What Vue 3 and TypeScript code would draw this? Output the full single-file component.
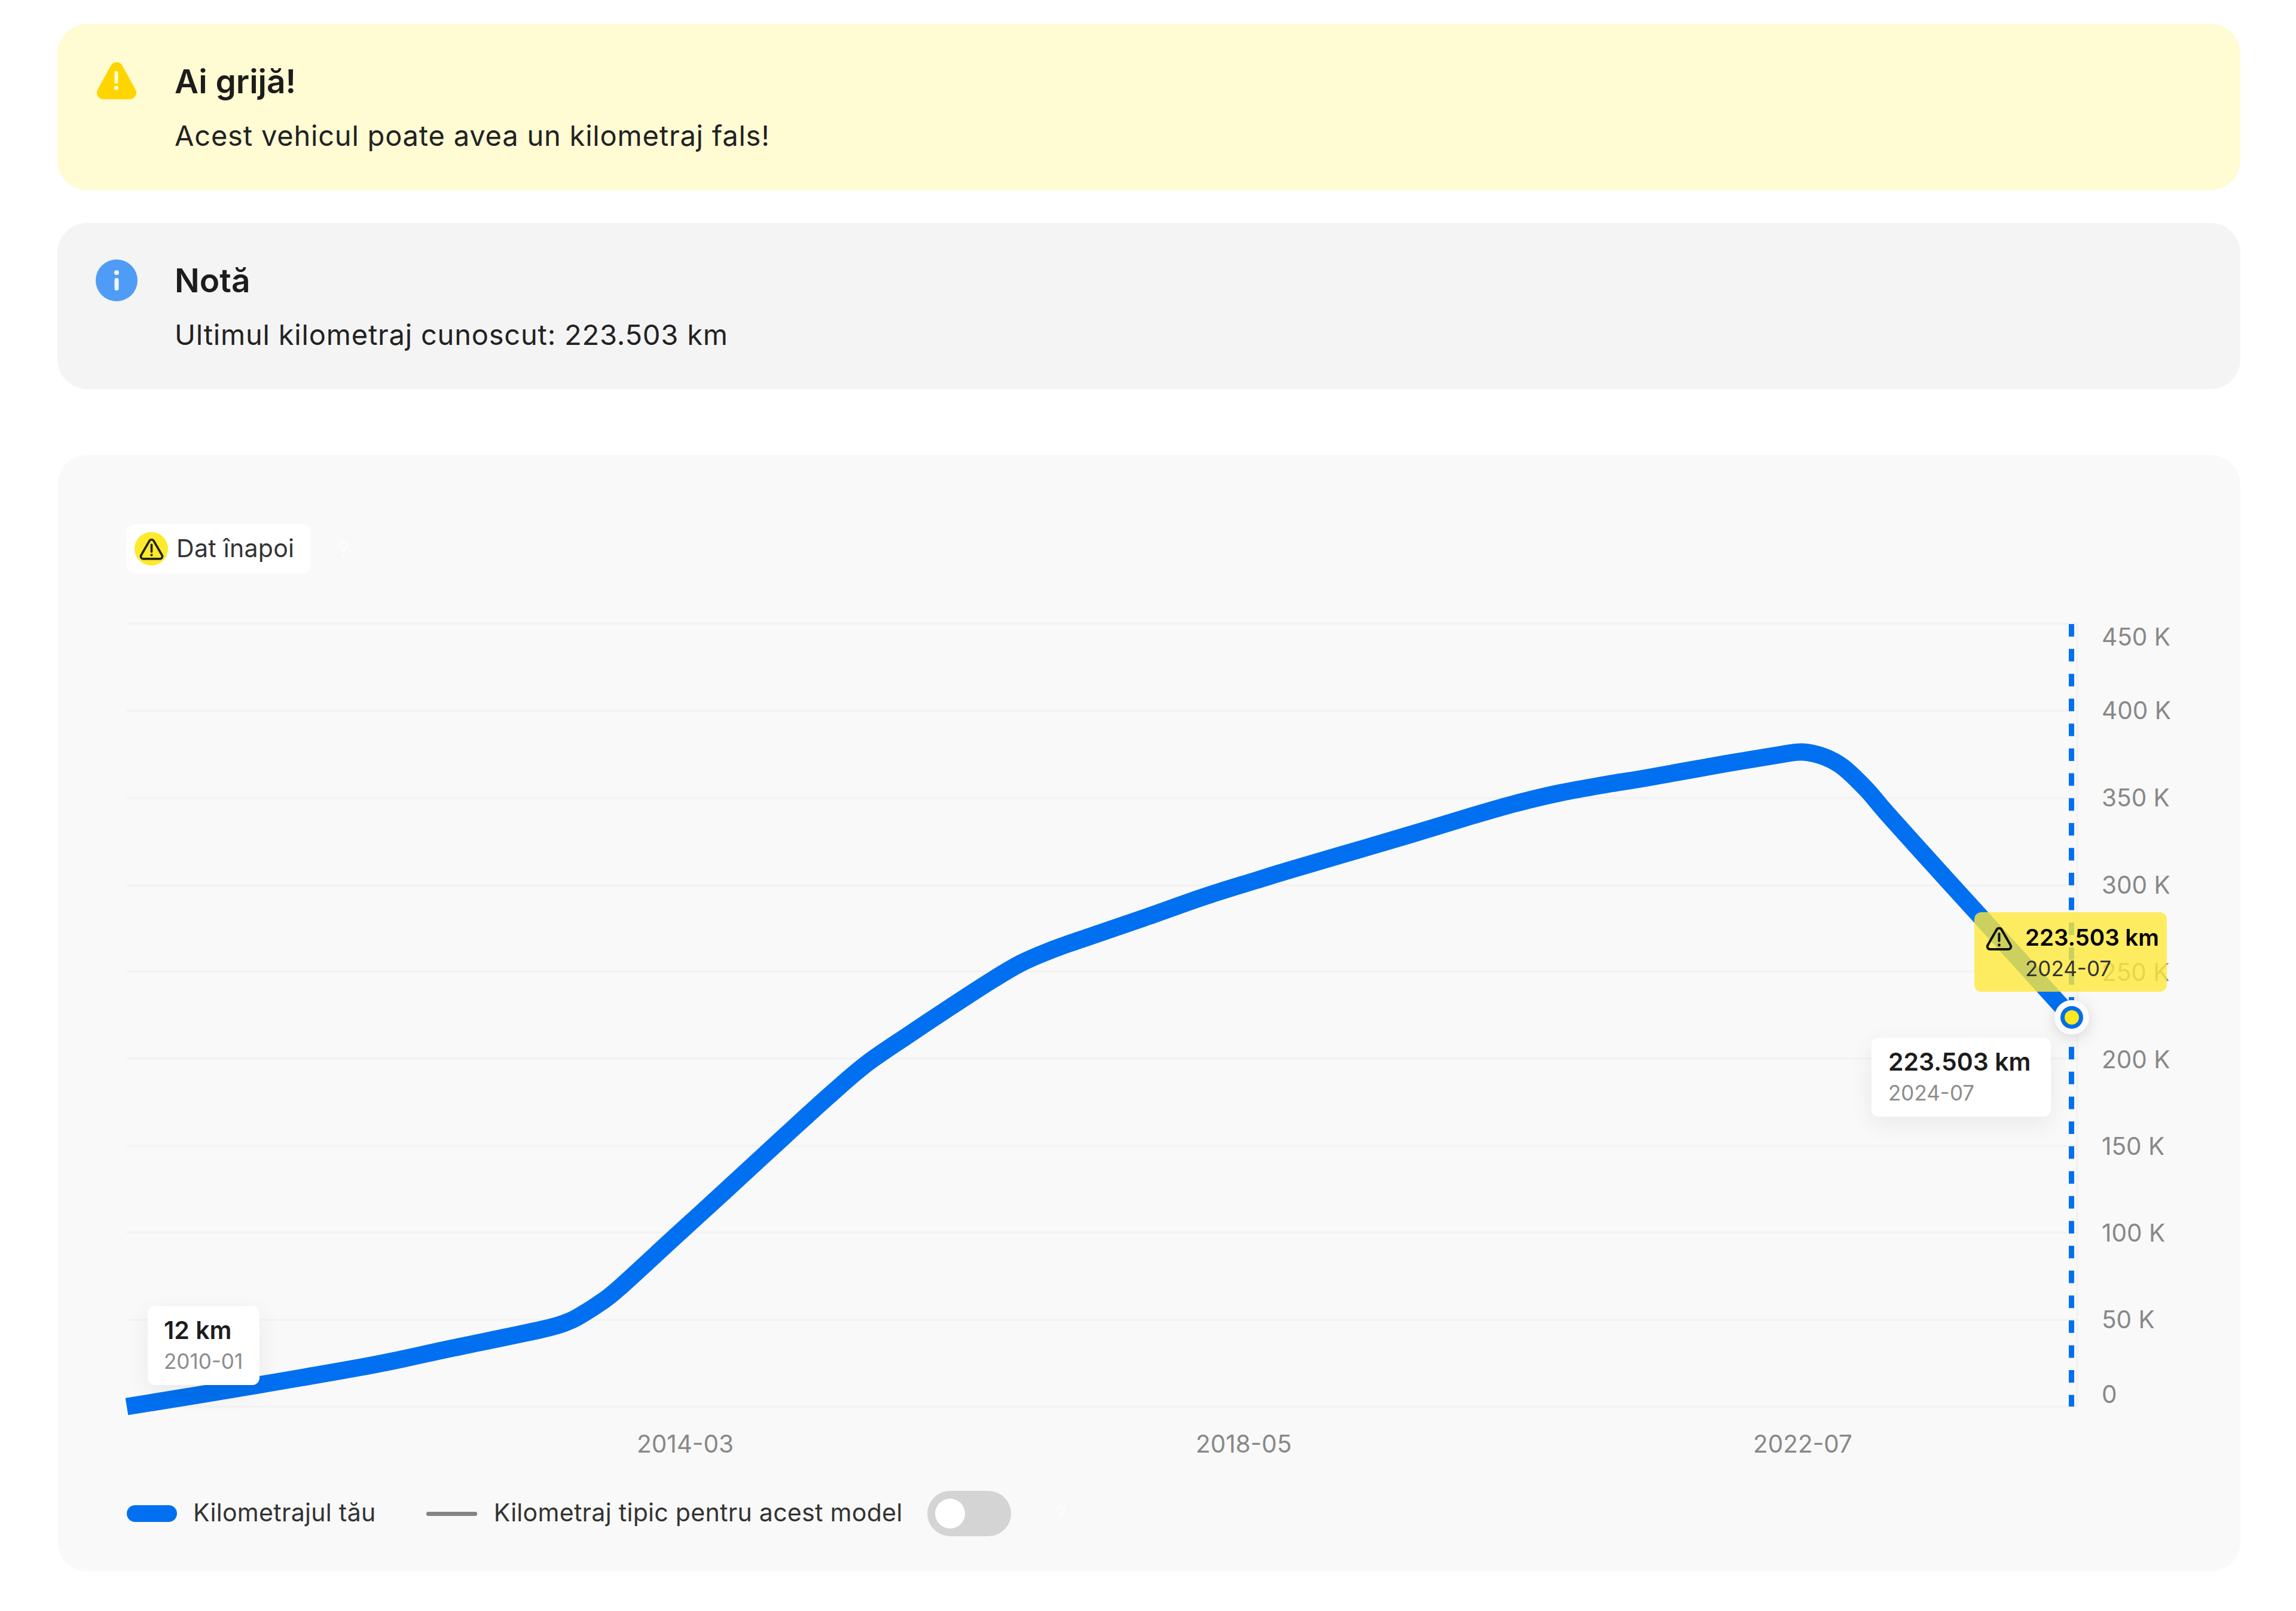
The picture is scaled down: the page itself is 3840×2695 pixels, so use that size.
<script setup lang="ts">
import { computed } from 'vue'

type Pt = [number, number]

const points: Pt[] = [
  [212, 2354], [420, 2320], [626, 2284], [753, 2257], [906, 2225], [950, 2212], [975, 2199],
  [1003, 2181], [1034, 2157], [1131, 2068], [1212, 1994], [1314, 1900], [1390, 1831],
  [1450, 1780], [1520, 1732], [1586, 1688], [1657, 1642], [1708, 1612], [1759, 1590],
  [1810, 1572], [1912, 1537], [2014, 1501], [2100, 1474], [2152, 1458], [2254, 1428],
  [2356, 1398], [2458, 1367], [2535, 1345], [2611, 1327], [2688, 1313], [2750, 1303],
  [2878, 1280], [2980, 1263], [3015, 1259], [3051, 1267], [3082, 1284], [3122, 1322],
  [3158, 1364], [3260, 1477], [3311, 1533], [3465, 1703],
]

const linePath = computed(() => {
  let d = `M${points[0][0]} ${points[0][1]}`
  for (let i = 0; i < points.length - 1; i++) {
    const p0 = points[Math.max(i - 1, 0)]
    const p1 = points[i]
    const p2 = points[i + 1]
    const p3 = points[Math.min(i + 2, points.length - 1)]
    const c1x = p1[0] + (p2[0] - p0[0]) / 6
    const c1y = p1[1] + (p2[1] - p0[1]) / 6
    const c2x = p2[0] - (p3[0] - p1[0]) / 6
    const c2y = p2[1] - (p3[1] - p1[1]) / 6
    d += ` C${c1x.toFixed(1)} ${c1y.toFixed(1)} ${c2x.toFixed(1)} ${c2y.toFixed(1)} ${p2[0]} ${p2[1]}`
  }
  return d
})

const gridY = [1044, 1190, 1336, 1482, 1626, 1772, 1918, 2063, 2209, 2354]

const yLabels: { text: string; y: number }[] = [
  { text: '450 K', y: 1066 },
  { text: '400 K', y: 1189 },
  { text: '350 K', y: 1335 },
  { text: '300 K', y: 1481 },
  { text: '250 K', y: 1627 },
  { text: '200 K', y: 1773 },
  { text: '150 K', y: 1918 },
  { text: '100 K', y: 2063 },
  { text: '50 K', y: 2208 },
  { text: '0', y: 2333 },
]

const xLabels: { text: string; x: number }[] = [
  { text: '2014-03', x: 1146 },
  { text: '2018-05', x: 2080 },
  { text: '2022-07', x: 3015 },
]

const warnPath = 'M18.5 5a4.6 4.6 0 0 1 8 0L41.5 31a4.6 4.6 0 0 1-4 7H7.5a4.6 4.6 0 0 1-4-7Z'
</script>

<template>
  <div class="page">
    <section class="alert alert-warn">
      <div class="alert-icon">
        <svg class="warn-solid" viewBox="0 0 66 63" aria-hidden="true">
          <path d="M33 12 L55 52 H11 Z" fill="#ffd500" stroke="#ffd500" stroke-width="22" stroke-linejoin="round" />
          <rect x="29.5" y="16" width="6" height="21" rx="3" fill="#fffbd3" />
          <circle cx="32.5" cy="44" r="3.6" fill="#fffbd3" />
        </svg>
      </div>
      <div>
        <h2 class="alert-title">Ai grijă!</h2>
        <p class="alert-text">Acest vehicul poate avea un kilometraj fals!</p>
      </div>
    </section>

    <section class="alert alert-note">
      <div class="alert-icon">
        <svg class="info" viewBox="0 0 70 70" aria-hidden="true">
          <circle cx="35" cy="35" r="35" fill="#4f9cf6" />
          <circle cx="35" cy="22" r="4" fill="#f4f4f4" />
          <rect x="31.5" y="31" width="7" height="21" rx="3.5" fill="#f4f4f4" />
        </svg>
      </div>
      <div>
        <h2 class="alert-title">Notă</h2>
        <p class="alert-text">Ultimul kilometraj cunoscut: 223.503 km</p>
      </div>
    </section>

    <section class="card">
      <div class="status-row">
        <div class="pill">
          <span class="pill-icon">
            <svg class="pill-glyph" viewBox="0 0 45 40" aria-hidden="true">
              <path :d="warnPath" fill="none" stroke="#222" stroke-width="4" stroke-linejoin="round" />
              <path d="M22.5 12V25" stroke="#222" stroke-width="4" stroke-linecap="round" />
              <circle cx="22.5" cy="31" r="2.2" fill="#222" />
            </svg>
          </span>
          <span class="pill-text">Dat înapoi</span>
        </div>
        <span class="hint">?</span>
      </div>

      <div class="chart">
        <svg class="chart-svg" viewBox="212 1030 3440 1430" aria-hidden="true">
          <line v-for="y in gridY" :key="y" x1="212" x2="3474" :y1="y" :y2="y" class="grid" />
          <line x1="3474" x2="3474" y1="1044" y2="2354" class="grid" />
          <text v-for="l in yLabels" :key="l.text" x="3515" :y="l.y" class="axis axis-y">{{ l.text }}</text>
          <text v-for="l in xLabels" :key="l.text" :x="l.x" y="2416" class="axis axis-x">{{ l.text }}</text>
          <line x1="3464.5" x2="3464.5" y1="1045" y2="2354" class="cursor" />
          <path :d="linePath" class="mileage" />
        </svg>

        <div class="tip tip-start">
          <strong>12 km</strong>
          <span>2010-01</span>
        </div>

        <div class="tip tip-end">
          <strong>223.503 km</strong>
          <span>2024-07</span>
        </div>

        <div class="tip-warn">
          <svg class="tip-warn-icon" viewBox="0 0 45 40" aria-hidden="true">
            <path :d="warnPath" fill="none" stroke="#111" stroke-width="4" stroke-linejoin="round" />
            <path d="M22.5 12V24" stroke="#111" stroke-width="4" stroke-linecap="round" />
            <circle cx="22.5" cy="31" r="2.4" fill="#111" />
          </svg>
          <div class="tip-warn-text">
            <strong>223.503 km</strong>
            <span>2024-07</span>
          </div>
        </div>

        <svg class="marker" viewBox="0 0 58 58" aria-hidden="true">
          <circle cx="29" cy="29" r="29" fill="#fbfbfb" />
          <circle cx="29" cy="29" r="19" fill="#006fe8" />
          <circle cx="29" cy="29" r="12" fill="#ffe81f" />
        </svg>
      </div>

      <div class="legend">
        <span class="swatch-main"></span>
        <span class="legend-text legend-first">Kilometrajul tău</span>
        <span class="swatch-typical"></span>
        <span class="legend-text legend-second">Kilometraj tipic pentru acest model</span>
        <span class="toggle"><span class="knob"></span></span>
        <span class="hint hint-legend">?</span>
      </div>
    </section>
  </div>
</template>

<style>
html,
body {
  margin: 0;
  background: #fff;
}
</style>

<style scoped>
.page {
  box-sizing: border-box;
  width: 3840px;
  height: 2695px;
  padding: 40px 93px 65px 96px;
  font-family: Inter, "Liberation Sans", sans-serif;
  color: #1c1c1c;
  display: flex;
  flex-direction: column;
}

.alert {
  box-sizing: border-box;
  height: 278px;
  border-radius: 50px;
  padding: 57px 60px;
  display: flex;
  gap: 58px;
}

.alert-warn {
  background: #fffbd3;
}

.alert-note {
  background: #f4f4f4;
  margin-top: 55px;
}

.alert-icon {
  width: 78px;
  height: 78px;
  display: flex;
  align-items: center;
  justify-content: center;
  flex: none;
}

.warn-solid {
  width: 66px;
  height: 63px;
  margin-top: -4px;
}

.info {
  width: 70px;
  height: 70px;
}

.alert-title {
  margin: 0;
  font-size: 55px;
  line-height: 78px;
  font-weight: 600;
}

.alert-text {
  margin: 17px 0 0;
  font-size: 47px;
  letter-spacing: 0.8px;
  line-height: 70px;
  font-weight: 400;
  color: #222;
}

.card {
  box-sizing: border-box;
  margin-top: 110px;
  height: 1868px;
  border-radius: 50px;
  background: #f9f9f9;
  padding: 116px 92px 57px 116px;
}

.status-row {
  display: flex;
  align-items: center;
  height: 82px;
}

.pill {
  display: flex;
  align-items: center;
  gap: 14px;
  height: 82px;
  padding: 0 28px 0 13px;
  background: #fff;
  border-radius: 14px;
  font-size: 41px;
  letter-spacing: 0.3px;
  color: #333;
}

.pill-text {
  padding-bottom: 3px;
}

.pill-icon {
  width: 56px;
  height: 56px;
  border-radius: 50%;
  background: #ffe92b;
  display: flex;
  align-items: center;
  justify-content: center;
}

.pill-glyph {
  width: 41px;
  height: 37px;
}

.hint {
  margin-left: 46px;
  font-size: 34px;
  color: #fefefe;
}

.chart {
  position: relative;
  margin-top: 70px;
  width: 3440px;
  height: 1430px;
}

.chart-svg {
  display: block;
  width: 3440px;
  height: 1430px;
  overflow: visible;
}

.grid {
  stroke: #f2f2f2;
  stroke-width: 3;
}

.axis {
  font-family: Inter, "Liberation Sans", sans-serif;
  font-size: 40.5px;
  fill: #888;
  dominant-baseline: central;
}

.axis-x {
  text-anchor: middle;
}

.cursor {
  stroke: #0070f0;
  stroke-width: 9;
  stroke-dasharray: 21 20.6;
}

.mileage {
  fill: none;
  stroke: #0070f0;
  stroke-width: 29;
  stroke-linejoin: round;
}

.tip {
  position: absolute;
  box-sizing: border-box;
  height: 132px;
  padding: 14px 28px;
  display: flex;
  flex-direction: column;
  background: #fff;
  border-radius: 12px;
  box-shadow: 0 12px 40px rgba(0, 0, 0, 0.07);
}

.tip strong {
  font-size: 41px;
  line-height: 52px;
  font-weight: 600;
  color: #1c1c1c;
}

.tip span {
  font-size: 35px;
  line-height: 52px;
  color: #8c8c8c;
}

.tip-start {
  left: 35px;
  top: 1156px;
  width: 187px;
  padding-left: 27px;
  padding-right: 0;
}

.tip-end {
  left: 2918px;
  top: 707px;
  width: 300px;
}

.tip-warn {
  position: absolute;
  box-sizing: border-box;
  left: 3090px;
  top: 497px;
  width: 322px;
  height: 133px;
  padding: 24px 0 0 19px;
  display: flex;
  gap: 21px;
  background: rgba(255, 233, 58, 0.8);
  border-radius: 12px;
}

.tip-warn-icon {
  width: 45px;
  height: 40px;
  flex: none;
}

.tip-warn-text {
  margin-top: -8px;
  display: flex;
  flex-direction: column;
}

.tip-warn-text strong {
  font-size: 38.5px;
  line-height: 52px;
  font-weight: 600;
  color: #000;
}

.tip-warn-text span {
  font-size: 35px;
  line-height: 52px;
  color: #333;
}

.marker {
  position: absolute;
  left: 3223.5px;
  top: 644px;
  width: 58px;
  height: 58px;
  filter: drop-shadow(0 5px 12px rgba(0, 0, 0, 0.14));
}

.legend {
  margin-top: 35px;
  height: 76px;
  display: flex;
  align-items: center;
}

.swatch-main {
  width: 84px;
  height: 28px;
  border-radius: 14px;
  background: #0070f0;
}

.swatch-typical {
  width: 85px;
  height: 7px;
  border-radius: 3px;
  background: #858585;
}

.legend-text {
  font-size: 41px;
  letter-spacing: 0.3px;
  padding-bottom: 4px;
  color: #333;
}

.legend-first {
  margin: 0 84px 0 27px;
}

.legend-second {
  margin: 0 42px 0 28px;
}

.toggle {
  box-sizing: border-box;
  width: 140px;
  height: 76px;
  border-radius: 38px;
  background: #d4d4d4;
  padding: 13px;
  display: flex;
}

.knob {
  width: 50px;
  height: 50px;
  border-radius: 50%;
  background: #fff;
}

.hint-legend {
  margin-left: 74px;
}
</style>
